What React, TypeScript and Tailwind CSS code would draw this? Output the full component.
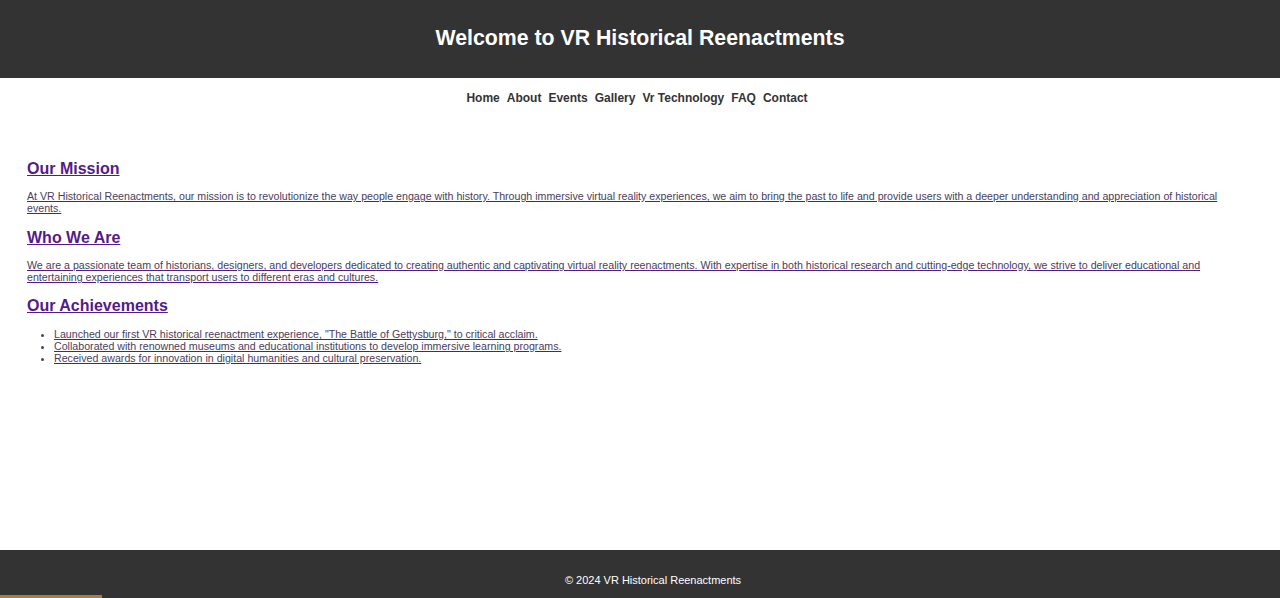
import React from "react";

export default function App() {
  const ff = { fontFamily: '"Liberation Sans", Arial, sans-serif' };
  return (
    <div className="h-[598px] flex flex-col bg-white overflow-hidden relative" style={ff}>
      <header className="h-[78px] shrink-0 bg-[#333333] flex items-center justify-center">
        <h1 className="text-[21.3px] font-bold text-white leading-none">Welcome to VR Historical Reenactments</h1>
      </header>
      <nav className="h-[40px] shrink-0 flex items-center justify-center gap-[7px] pr-[6px] text-[12px] font-bold text-[#333333]">
        <span>Home</span>
        <span>About</span>
        <span>Events</span>
        <span>Gallery</span>
        <span>Vr Technology</span>
        <span>FAQ</span>
        <span>Contact</span>
      </nav>
      <main className="flex-1 px-[27px] pt-[41px] underline decoration-[#551A8B]">
        <h2 className="text-[16px] leading-[20px] font-bold text-[#551A8B]">Our Mission</h2>
        <p className="mt-[11px] text-[10.65px] leading-[12px] text-[#4a3d5c]">
          At VR Historical Reenactments, our mission is to revolutionize the way people engage with history. Through immersive virtual reality experiences, we aim to bring the past to life and provide users with a deeper understanding and appreciation of historical events.
        </p>
        <h2 className="mt-[14px] text-[16px] leading-[20px] font-bold text-[#551A8B]">Who We Are</h2>
        <p className="mt-[11px] text-[10.65px] leading-[12px] text-[#4a3d5c]">
          We are a passionate team of historians, designers, and developers dedicated to creating authentic and captivating virtual reality reenactments. With expertise in both historical research and cutting-edge technology, we strive to deliver educational and entertaining experiences that transport users to different eras and cultures.
        </p>
        <h2 className="mt-[13px] text-[16px] leading-[20px] font-bold text-[#551A8B]">Our Achievements</h2>
        <ul className="mt-[12px] pl-[27px] list-disc text-[10.65px] leading-[12px] text-[#4a3d5c]">
          <li>Launched our first VR historical reenactment experience, "The Battle of Gettysburg," to critical acclaim.</li>
          <li>Collaborated with renowned museums and educational institutions to develop immersive learning programs.</li>
          <li>Received awards for innovation in digital humanities and cultural preservation.</li>
        </ul>
      </main>
      <footer className="h-[48px] shrink-0 bg-[#333333] flex justify-center pt-[25px] pl-[26px]">
        <span className="text-[11px] leading-[11px] text-white">© 2024 VR Historical Reenactments</span>
      </footer>
      <div className="absolute left-0 bottom-0 w-[102px] h-[3px] bg-[#b07a3a]" />
    </div>
  );
}
